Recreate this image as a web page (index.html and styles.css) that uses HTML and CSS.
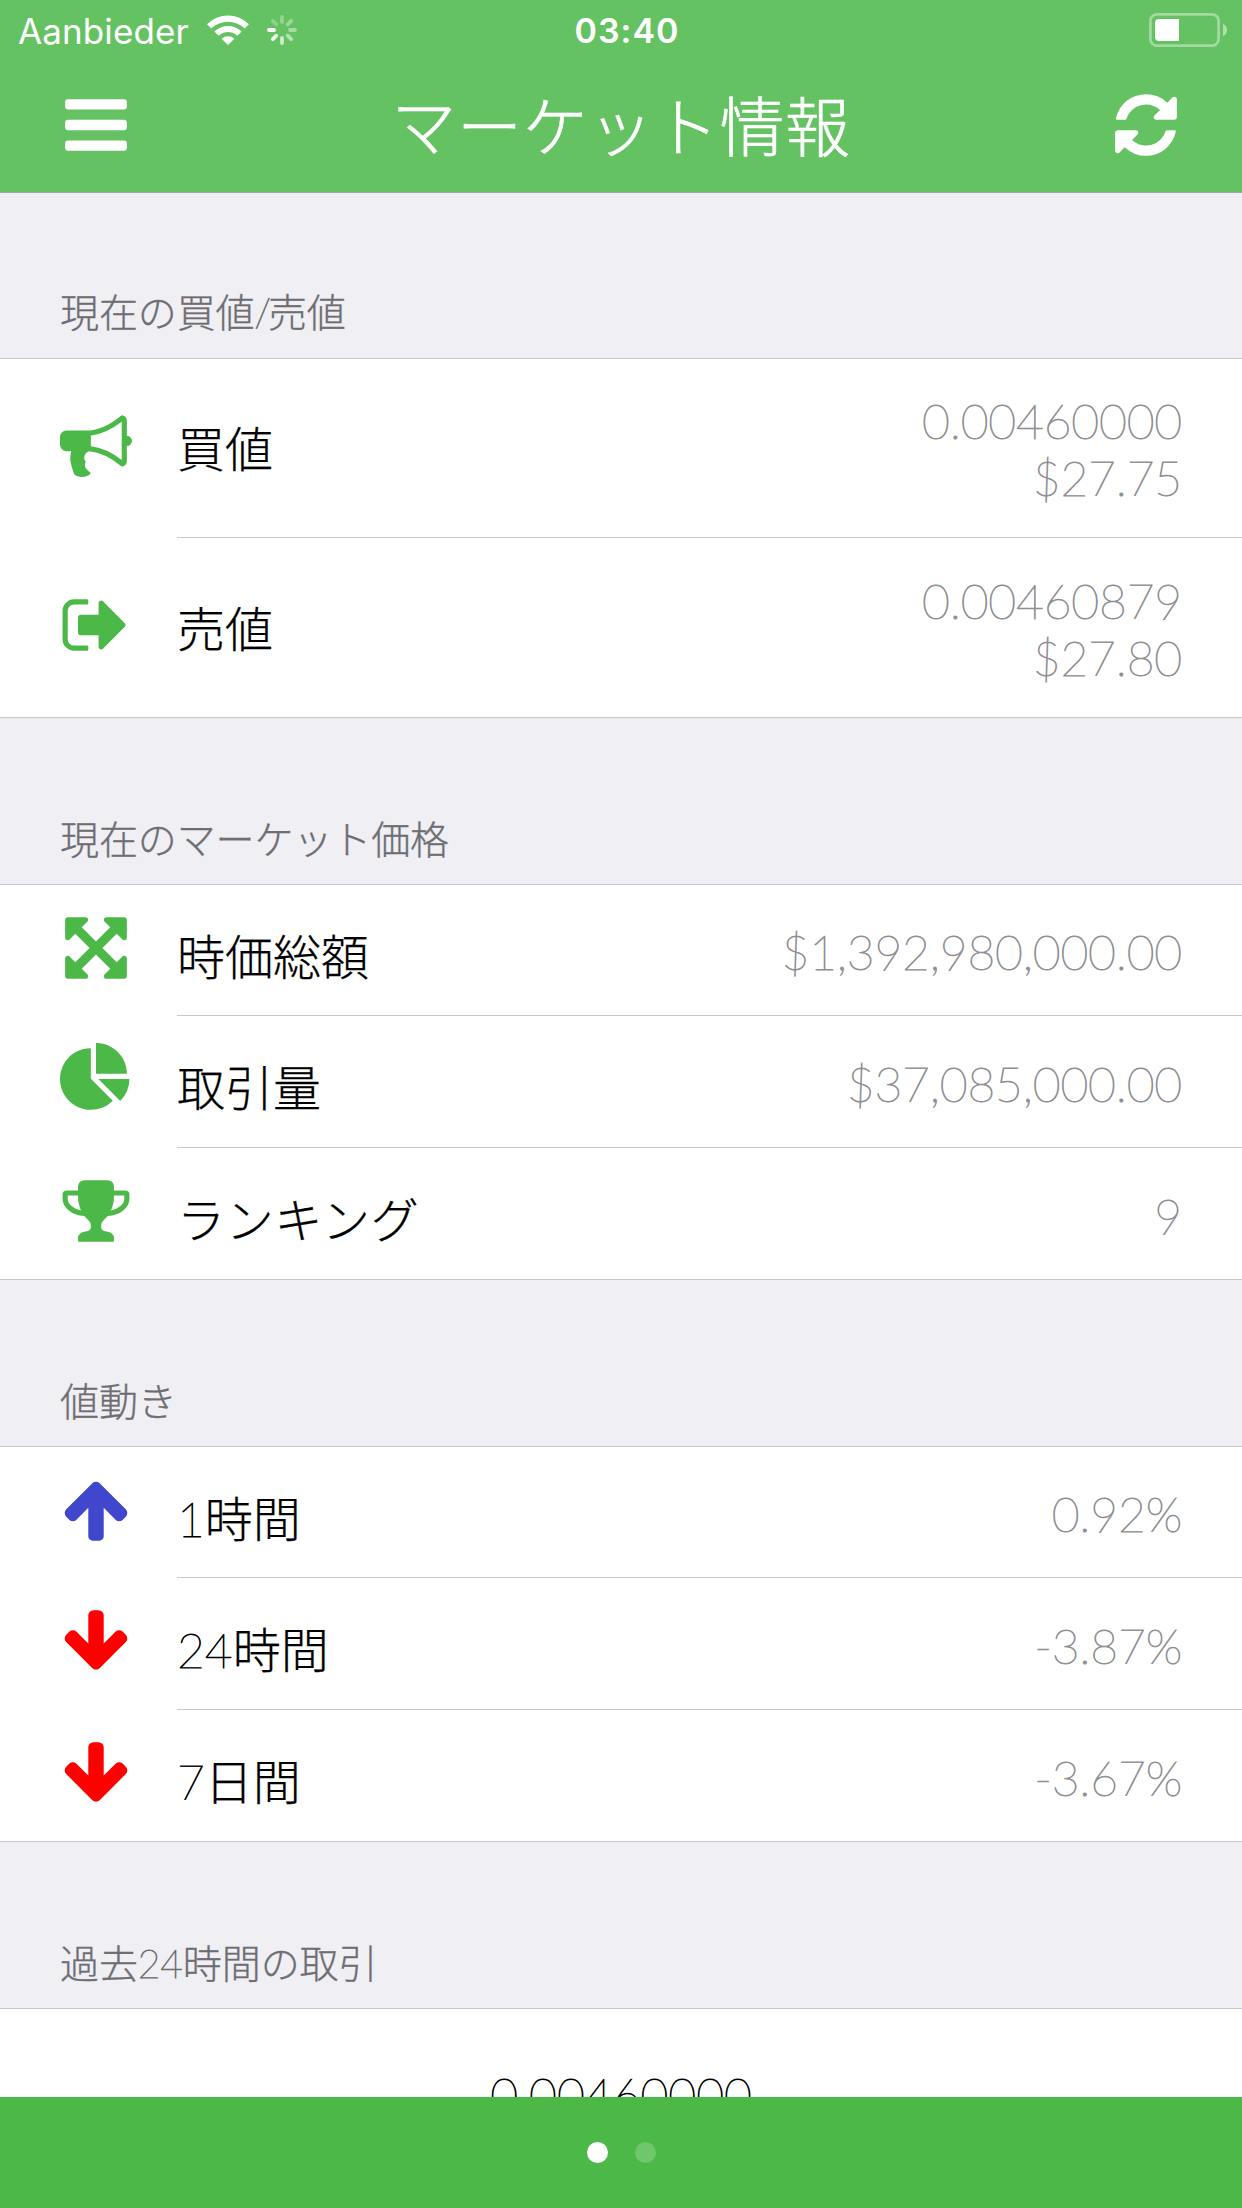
FILE: index.html
```html
<!DOCTYPE html>
<html lang="ja">
<head>
<meta charset="utf-8">
<title>マーケット情報</title>
<link rel="stylesheet" href="styles.css">
</head>
<body>
<div class="screen">
  <header class="header">
    <div class="status">
      <div class="status-left">
        <span class="carrier">Aanbieder</span>
        <svg class="wifi" viewBox="0 0 42 30"><path d="M0 9.200A30 30 0 0 1 42 9.200L37.600 13.500A24 24 0 0 0 4.400 13.500Z"/><path d="M7.300 16.500A20 20 0 0 1 34.700 16.500L30.300 20.800A13.500 13.500 0 0 0 11.700 20.800Z"/><path d="M14.600 23.700A9.500 9.500 0 0 1 27.400 23.700L21 30Z"/></svg>
        <svg class="spinner" viewBox="-15 -15 30 30"><g stroke="#fff" stroke-width="3.800" stroke-linecap="round"><path opacity=".3" d="M0-8v-5"/><path opacity=".36" d="M5.700-5.700l3.500-3.500"/><path opacity=".42" d="M8 0h5"/><path opacity=".52" d="M5.700 5.700l3.500 3.500"/><path opacity=".68" d="M0 8v5"/><path opacity=".9" d="M-5.700 5.700l-3.500 3.500"/><path d="M-8 0h-5"/><path opacity=".26" d="M-5.700-5.700l-3.500-3.500"/></g></svg>
      </div>
      <span class="clock">03:40</span>
      <div class="status-right">
        <svg class="battery" viewBox="0 0 78 34"><rect x="1.400" y="1.400" width="68.200" height="31.200" rx="6.500" fill="none" stroke="#fff" stroke-opacity=".4" stroke-width="2.700"/><path d="M10 6H30V28H10Q6 28 6 24V10Q6 6 10 6Z"/><path opacity=".5" d="M74 11Q78 12.500 78 17T74 23Z"/></svg>
      </div>
    </div>
    <div class="nav">
      <svg class="icon" viewBox="0 0 1792 1792"><path d="M1664 1344v128q0 26-19 45t-45 19h-1408q-26 0-45-19t-19-45v-128q0-26 19-45t45-19h1408q26 0 45 19t19 45zm0-512v128q0 26-19 45t-45 19h-1408q-26 0-45-19t-19-45v-128q0-26 19-45t45-19h1408q26 0 45 19t19 45zm0-512v128q0 26-19 45t-45 19h-1408q-26 0-45-19t-19-45v-128q0-26 19-45t45-19h1408q26 0 45 19t19 45z"/></svg>
      <h1 class="title">マーケット情報</h1>
      <svg class="icon" viewBox="0 0 1792 1792"><path d="M1639 1056q0 5-1 7-64 268-268 434.500t-478 166.500q-146 0-282.500-55t-243.500-157l-129 129q-19 19-45 19t-45-19-19-45v-448q0-26 19-45t45-19h448q26 0 45 19t19 45-19 45l-137 137q71 66 161 102t187 36q134 0 250-65t186-179q11-17 53-117 8-23 30-23h192q13 0 22.500 9.500t9.500 22.500zm25-800v448q0 26-19 45t-45 19h-448q-26 0-45-19t-19-45 19-45l138-138q-148-137-349-137-134 0-250 65t-186 179q-11 17-53 117-8 23-30 23h-199q-13 0-22.500-9.500t-9.500-22.500v-7q65-268 270-434.500t480-166.500q146 0 284 55.500t245 156.500l130-129q19-19 45-19t45 19 19 45z"/></svg>
    </div>
  </header>

  <main class="list">
    <h2 class="section first">現在の買値<span class="slash">/</span>売値</h2>
    <div class="row tall">
      <svg class="icon green" viewBox="0 0 1792 1792"><path d="M1664 640q53 0 90.500 37.500t37.500 90.500-37.500 90.500-90.500 37.500v384q0 52-38 90t-90 38q-417-347-812-380-58 19-91 66t-31 100.500 40 92.500q-20 33-23 65.500t6 58 33.500 55 48 50 61.500 50.500q-29 58-111.500 83t-168.500 11.500-132-55.500q-7-23-29.500-87.500t-32-94.500-23-89-15-101 3.500-98.500 22-110.500h-122q-66 0-113-47t-47-113v-192q0-66 47-113t113-47h480q435 0 896-384 52 0 90 38t38 90v384zm-128 604v-954q-394 302-768 343v270q377 42 768 341z"/></svg>
      <div class="cell"><span class="label">買値</span><span class="value">0.00460000<br>$27.75</span></div>
    </div>
    <div class="row tall last">
      <svg class="icon green" viewBox="0 0 1792 1792"><path d="M704 1440q0 4 1 20t.5 26.500-3 23.500-10 19.500-20.500 6.500h-320q-119 0-203.500-84.500t-84.500-203.500v-704q0-119 84.500-203.500t203.500-84.500h320q13 0 22.500 9.500t9.500 22.500q0 4 1 20t.5 26.500-3 23.500-10 19.500-20.500 6.500h-320q-66 0-113 47t-47 113v704q0 66 47 113t113 47h312l11.500 1 11.500 3 8 5.500 7 9 2 13.500zm928-544q0 26-19 45l-544 544q-19 19-45 19t-45-19-19-45v-288h-448q-26 0-45-19t-19-45v-384q0-26 19-45t45-19h448v-288q0-26 19-45t45-19 45 19l544 544q19 19 19 45z"/></svg>
      <div class="cell"><span class="label">売値</span><span class="value">0.00460879<br>$27.80</span></div>
    </div>

    <h2 class="section">現在のマーケット価格</h2>
    <div class="row short">
      <svg class="icon green" viewBox="0 0 1792 1792"><path d="M1411 541l-355 355 355 355 144-144q29-31 70-14 39 17 39 59v448q0 26-19 45t-45 19h-448q-42 0-59-40-17-39 14-69l144-144-355-355-355 355 144 144q31 30 14 69-17 40-59 40h-448q-26 0-45-19t-19-45v-448q0-42 40-59 39-17 69 14l144 144 355-355-355-355-144 144q-19 19-45 19-12 0-24-5-40-17-40-59v-448q0-26 19-45t45-19h448q42 0 59 40 17 39-14 69l-144 144 355 355 355-355-144-144q-31-30-14-69 17-40 59-40h448q26 0 45 19t19 45v448q0 42-39 59-13 5-25 5-26 0-45-19z"/></svg>
      <div class="cell"><span class="label">時価総額</span><span class="value">$1,392,980,000.00</span></div>
    </div>
    <div class="row">
      <svg class="icon green" viewBox="0 0 1792 1792"><path d="M768 890l546 546q-106 108-247.500 168t-298.500 60q-209 0-385.500-103t-279.500-279.500-103-385.500 103-385.500 279.500-279.500 385.500-103v762zm187 6h773q0 157-60 298.500t-168 247.500zm709-128h-768v-768q209 0 385.500 103t279.500 279.500 103 385.500z"/></svg>
      <div class="cell"><span class="label">取引量</span><span class="value">$37,085,000.00</span></div>
    </div>
    <div class="row last">
      <svg class="icon green" viewBox="0 0 1792 1792"><path d="M522 883q-74-162-74-371h-256v96q0 78 94.500 162t235.500 113zm1078-275v-96h-256q0 209-74 371 141-29 235.500-113t94.500-162zm128-128v128q0 71-41.500 143t-112 130-173 97.500-215.500 44.500q-42 54-95 95-38 34-52.500 72.500t-14.500 89.500q0 54 30.500 91t97.500 37q75 0 133.500 45.500t58.500 114.500v64q0 14-9 23t-23 9h-832q-14 0-23-9t-9-23v-64q0-69 58.500-114.500t133.500-45.500q67 0 97.500-37t30.500-91q0-51-14.500-89.500t-52.500-72.500q-53-41-95-95-113-5-215.500-44.500t-173-97.500-112-130-41.500-143v-128q0-40 28-68t68-28h288v-96q0-66 47-113t113-47h576q66 0 113 47t47 113v96h288q40 0 68 28t28 68z"/></svg>
      <div class="cell"><span class="label kana">ランキング</span><span class="value">9</span></div>
    </div>

    <h2 class="section">値動き</h2>
    <div class="row short">
      <svg class="icon blue" viewBox="0 0 1792 1792"><path d="M1675 971q0 51-37 90l-75 75q-38 38-91 38-54 0-90-38l-294-293v704q0 52-37.500 84.500t-90.500 32.500h-128q-53 0-90.500-32.500t-37.500-84.500v-704l-294 293q-36 38-90 38t-90-38l-75-75q-38-38-38-90 0-53 38-91l651-651q35-37 90-37 54 0 91 37l651 651q37 39 37 91z"/></svg>
      <div class="cell"><span class="label"><span class="num">1</span>時間</span><span class="value">0.92%</span></div>
    </div>
    <div class="row">
      <svg class="icon red" viewBox="0 0 1792 1792"><path d="M1675 832q0 53-37 90l-651 652q-39 37-91 37-53 0-90-37l-651-652q-38-36-38-90 0-53 38-91l74-75q39-37 91-37 53 0 90 37l294 294v-704q0-52 38-90t90-38h128q52 0 90 38t38 90v704l294-294q37-37 90-37 52 0 91 37l75 75q37 39 37 91z"/></svg>
      <div class="cell"><span class="label"><span class="num">24</span>時間</span><span class="value">-3.87%</span></div>
    </div>
    <div class="row last">
      <svg class="icon red" viewBox="0 0 1792 1792"><path d="M1675 832q0 53-37 90l-651 652q-39 37-91 37-53 0-90-37l-651-652q-38-36-38-90 0-53 38-91l74-75q39-37 91-37 53 0 90 37l294 294v-704q0-52 38-90t90-38h128q52 0 90 38t38 90v704l294-294q37-37 90-37 52 0 91 37l75 75q37 39 37 91z"/></svg>
      <div class="cell"><span class="label"><span class="num">7</span>日間</span><span class="value">-3.67%</span></div>
    </div>

    <h2 class="section">過去<span class="num">24</span>時間の取引</h2>
    <div class="trade">0.00460000</div>
  </main>

  <footer class="pager"><span class="dot active"></span><span class="dot"></span></footer>
</div>
</body>
</html>
```
FILE: styles.css
```css
* { box-sizing: border-box; }

body {
  margin: 0;
  background: #efeff4;
  font-family: Lato, "Noto Sans CJK JP", sans-serif;
  font-weight: 300;
}

.screen {
  display: flex;
  flex-direction: column;
  width: 1242px;
  height: 2208px;
  overflow: hidden;
}

svg { display: block; fill: #fff; flex: none; }

.header {
  flex: none;
  height: 193px;
  background: #65c263;
  border-bottom: 1px solid #a7a7aa;
  color: #fff;
}

.status {
  display: grid;
  grid-template-columns: 1fr auto 1fr;
  align-items: center;
  height: 60px;
  padding: 0 15px 0 18px;
  font-family: Inter, sans-serif;
  font-size: 35px;
  line-height: 58px;
}

.status-left { display: flex; align-items: center; }
.carrier { width: 173px; font-weight: 400; letter-spacing: 0.1px; padding-top: 2px; }
.wifi { width: 42px; height: 30px; margin-left: 16px; }
.spinner { width: 30px; height: 30px; margin-left: 18px; }
.clock { font-size: 34px; font-weight: 600; letter-spacing: 1px; padding: 2px 0 0 9px; }
.status-right { display: flex; justify-content: flex-end; }
.battery { width: 78px; height: 34px; }

.nav {
  display: flex;
  align-items: center;
  justify-content: space-between;
  height: 130px;
  padding: 0 60px;
}

.title {
  margin: 0;
  padding-top: 1px;
  font-size: 65px;
  font-weight: 300;
  line-height: 80px;
  letter-spacing: 0.6px;
  white-space: nowrap;
  -webkit-text-stroke: 0.6px currentColor;
}

.icon { width: 72px; height: 72px; }
.green { fill: #4bb847; }
.blue { fill: #4147cc; }
.red { fill: #f00; }

.list { flex: 1; min-height: 0; overflow: hidden; }

.section {
  height: 167px;
  margin: 0;
  padding: 93px 60px 0;
  border-bottom: 1px solid #c8c7cc;
  color: #6d6d72;
  font-size: 39px;
  font-weight: 300;
  line-height: 56px;
  letter-spacing: -0.1px;
  -webkit-text-stroke: 0.3px currentColor;
}

.section.first { height: 166px; padding-top: 91px; }

.row {
  display: flex;
  height: 132px;
  padding-left: 60px;
  background: #fff;
}

.row.short { height: 131px; }
.row.tall { height: 180px; }
.row.tall:not(.last) { height: 179px; }
.row.last { border-bottom: 1px solid #c8c7cc; }
.row > .icon { align-self: center; margin: 0 45px 6px 0; }

.cell {
  display: flex;
  flex: 1;
  align-items: center;
  justify-content: space-between;
  padding-right: 60px;
  border-bottom: 1px solid #c8c7cc;
}

.row.last > .cell { border-bottom: 0; }

.label {
  padding-top: 13px;
  color: #000;
  font-size: 48px;
  line-height: 64px;
  -webkit-text-stroke: 0.25px currentColor;
}

.row.tall .label { padding-top: 2px; }
.label.kana { letter-spacing: 0.8px; }

/* Latin digits use the hairline cut, slightly thickened */
.num, .slash, .value, .trade {
  font-weight: 100;
  -webkit-text-stroke: 0.9px currentColor;
}

.slash { letter-spacing: -3px; }

.value {
  padding-top: 3px;
  color: #8e8e93;
  font-size: 48px;
  line-height: 57px;
  letter-spacing: -0.18px;
  text-align: right;
}

.row.tall .value { padding-top: 2px; }

.trade {
  height: 200px;
  padding-top: 57px;
  background: #fff;
  color: #000;
  font-size: 48px;
  line-height: 57px;
  text-align: center;
}

.pager {
  display: flex;
  flex: none;
  align-items: center;
  justify-content: center;
  gap: 27px;
  height: 111px;
  background: #4bb847;
}

.dot {
  width: 21px;
  height: 21px;
  border-radius: 50%;
  background: rgba(255, 255, 255, 0.2);
}

.dot.active { background: #fff; }
```
